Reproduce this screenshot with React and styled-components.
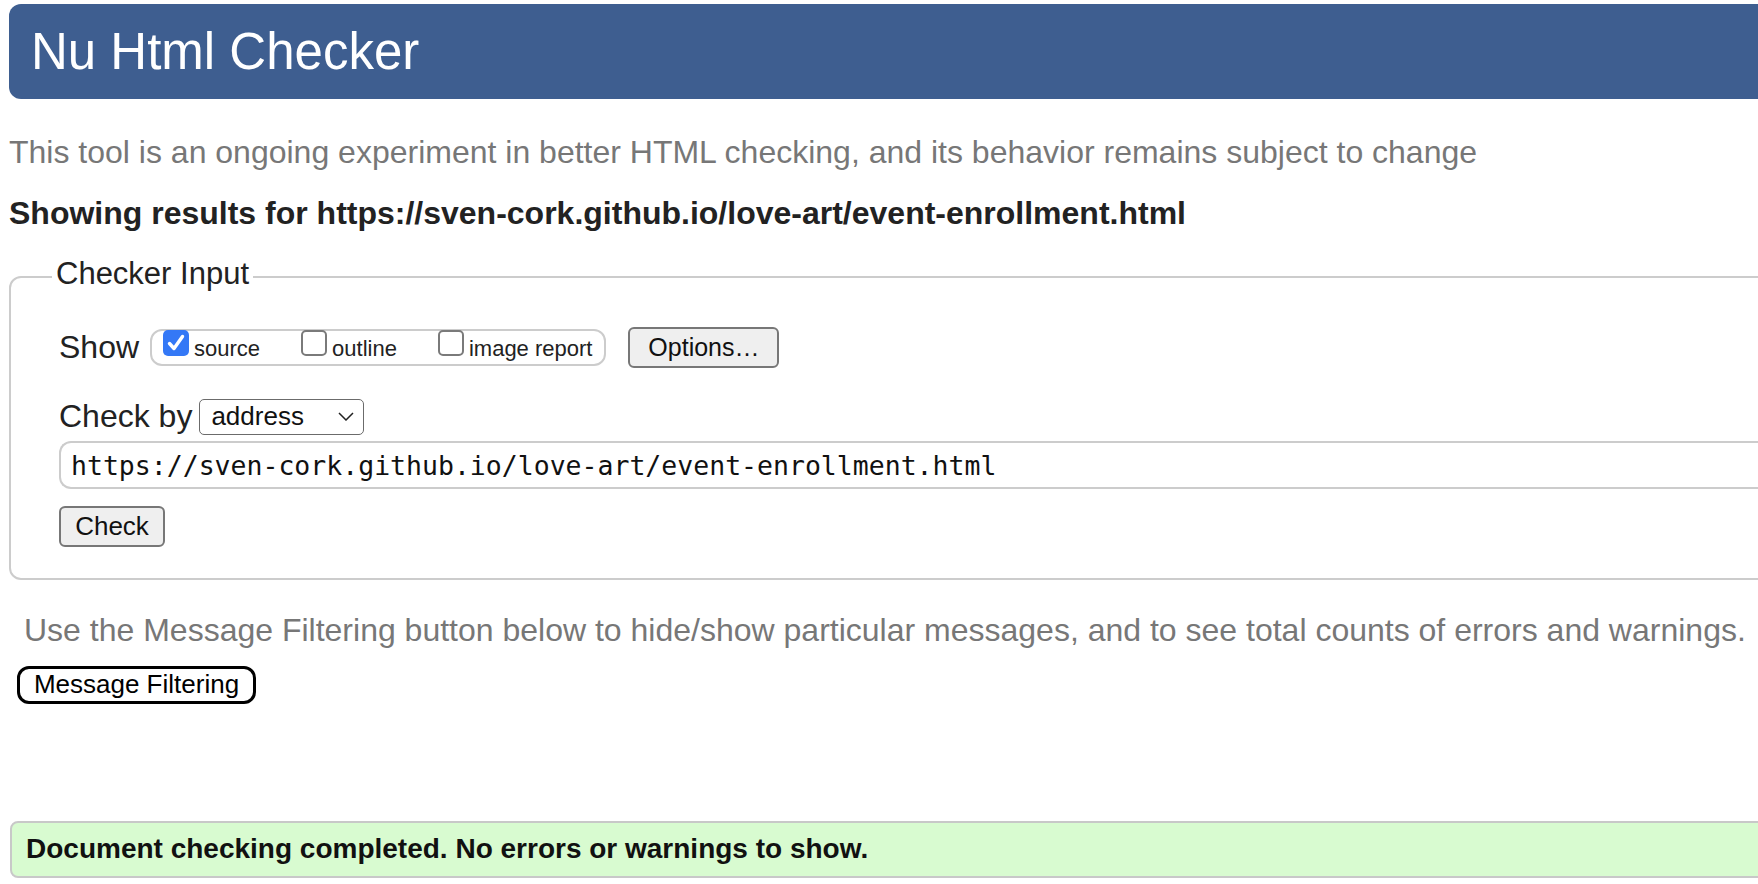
import styled, { createGlobalStyle } from "styled-components";

const GlobalStyle = createGlobalStyle`
  html, body {
    margin: 0;
    padding: 0;
    background: #ffffff;
    overflow: hidden;
  }
  body {
    font-family: "Liberation Sans", Arial, Helvetica, sans-serif;
    color: #222222;
  }
  * {
    box-sizing: border-box;
  }
`;

const options = [
  { label: "source", checked: true },
  { label: "outline", checked: false },
  { label: "image report", checked: false },
];

function CheckMark() {
  return (
    <svg width="26" height="26" viewBox="0 0 26 26">
      <path
        d="M6.5 13.5 L11 18.5 L19.5 6.5"
        fill="none"
        stroke="#ffffff"
        strokeWidth="3.4"
        strokeLinecap="round"
        strokeLinejoin="round"
      />
    </svg>
  );
}

function Chevron() {
  return (
    <svg width="16" height="9" viewBox="0 0 16 9">
      <polyline
        points="1,1 8,8 15,1"
        fill="none"
        stroke="#222222"
        strokeWidth="1.5"
      />
    </svg>
  );
}

function App() {
  return (
    <>
      <GlobalStyle />
      <Page>
        <Header>
          <Title>Nu Html Checker</Title>
        </Header>
        <Intro>
          This tool is an ongoing experiment in better HTML checking, and its
          behavior remains subject to change
        </Intro>
        <Results>
          Showing results for
          https://sven-cork.github.io/love-art/event-enrollment.html
        </Results>

        <InputFieldset>
          <Legend>Checker Input</Legend>
          <Row>
            <RowLabel>Show</RowLabel>
            <ShowGroup>
              {options.map((opt) => (
                <Option key={opt.label}>
                  <Box $checked={opt.checked}>
                    {opt.checked && <CheckMark />}
                  </Box>
                  <OptionText>{opt.label}</OptionText>
                </Option>
              ))}
            </ShowGroup>
            <Button $width={151} $size={25}>
              Options…
            </Button>
          </Row>
          <Row $top={30}>
            <RowLabel>Check by</RowLabel>
            <Select>
              <span>address</span>
              <Chevron />
            </Select>
          </Row>
          <UrlField>
            https://sven-cork.github.io/love-art/event-enrollment.html
          </UrlField>
          <Button $width={106} $size={26} $top={17}>
            Check
          </Button>
        </InputFieldset>

        <Help>
          Use the Message Filtering button below to hide/show particular
          messages, and to see total counts of errors and warnings.
        </Help>
        <FilterButton>Message Filtering</FilterButton>

        <Success>
          Document checking completed. No errors or warnings to show.
        </Success>
      </Page>
    </>
  );
}

export default App;

const Page = styled.div`
  width: 1820px;
  padding-left: 9px;
  padding-top: 4px;
`;

const Header = styled.header`
  height: 95px;
  border-radius: 12px;
  background-color: #3e5e90;
  display: flex;
  align-items: center;
  padding-left: 22px;
`;

const Title = styled.h1`
  margin: 0;
  font-size: 51px;
  font-weight: normal;
  color: #ffffff;
  line-height: 1;
`;

const Intro = styled.p`
  margin: 35px 0 0;
  font-size: 32px;
  line-height: 1.15;
  color: #777777;
  white-space: nowrap;
`;

const Results = styled.h2`
  margin: 24px 0 0;
  font-size: 32px;
  line-height: 1.15;
  font-weight: bold;
  color: #222222;
  white-space: nowrap;
`;

const InputFieldset = styled.fieldset`
  margin: 24px 0 0;
  border: 2px solid #cccccc;
  border-radius: 12px;
  padding: 28px 0 31px 48px;
  min-width: 0;
`;

const Legend = styled.legend`
  font-size: 31px;
  line-height: 1.15;
  color: #222222;
  padding: 0 4px 8px;
  margin-left: -7px;
`;

const Row = styled.div`
  display: flex;
  align-items: center;
  margin-top: ${(p) => p.$top || 0}px;
`;

const RowLabel = styled.span`
  font-size: 32px;
  line-height: 1.15;
  color: #222222;
`;

const ShowGroup = styled.span`
  display: inline-flex;
  align-items: flex-start;
  height: 37px;
  margin: 0 22px 0 11px;
  padding: 0 12px 0 11px;
  border: 2px solid #cccccc;
  border-radius: 12px;
  gap: 41px;
`;

const Option = styled.label`
  display: flex;
  align-items: flex-start;
  gap: 5px;
`;

const Box = styled.span`
  width: 26px;
  height: 26px;
  margin-top: -1px;
  border-radius: 5px;
  display: flex;
  align-items: center;
  justify-content: center;
  background-color: ${(p) => (p.$checked ? "#3478f6" : "#ffffff")};
  border: ${(p) => (p.$checked ? "none" : "2px solid #7a7a7a")};
`;

const OptionText = styled.span`
  padding-top: 5px;
  font-size: 22px;
  line-height: 1.15;
  color: #222222;
`;

const Button = styled.div`
  width: ${(p) => p.$width}px;
  height: 41px;
  margin-top: ${(p) => p.$top || 0}px;
  display: flex;
  align-items: center;
  justify-content: center;
  font-size: ${(p) => p.$size}px;
  color: #111111;
  background-color: #efefef;
  border: 2px solid #777777;
  border-radius: 6px;
`;

const Select = styled.div`
  width: 165px;
  height: 36px;
  margin-left: 7px;
  display: flex;
  align-items: center;
  justify-content: space-between;
  padding: 0 9px 0 11px;
  font-size: 26px;
  color: #111111;
  border: 1.5px solid #6b6b6b;
  border-radius: 5px;
  background: #ffffff;
`;

const UrlField = styled.div`
  margin-top: 6px;
  height: 48px;
  display: flex;
  align-items: center;
  padding-left: 10px;
  font-family: "DejaVu Sans Mono", "Liberation Mono", monospace;
  font-size: 26.5px;
  color: #111111;
  border: 2px solid #cccccc;
  border-right: none;
  border-radius: 12px 0 0 12px;
`;

const Help = styled.p`
  margin: 32px 0 0;
  padding-left: 15px;
  font-size: 32px;
  line-height: 1.15;
  color: #777777;
  white-space: nowrap;
`;

const FilterButton = styled.div`
  display: flex;
  align-items: center;
  justify-content: center;
  width: 239px;
  height: 38px;
  margin: 17px 0 0 8px;
  font-size: 26px;
  color: #000000;
  background: #ffffff;
  border: 3.5px solid #000000;
  border-radius: 12px;
`;

const Success = styled.div`
  margin: 117px 0 0 1px;
  height: 57px;
  display: flex;
  align-items: center;
  padding-left: 14px;
  font-size: 28px;
  font-weight: bold;
  color: #111111;
  background-color: #d8fbd0;
  border: 2px solid #c8c8c8;
  border-radius: 8px;
`;
